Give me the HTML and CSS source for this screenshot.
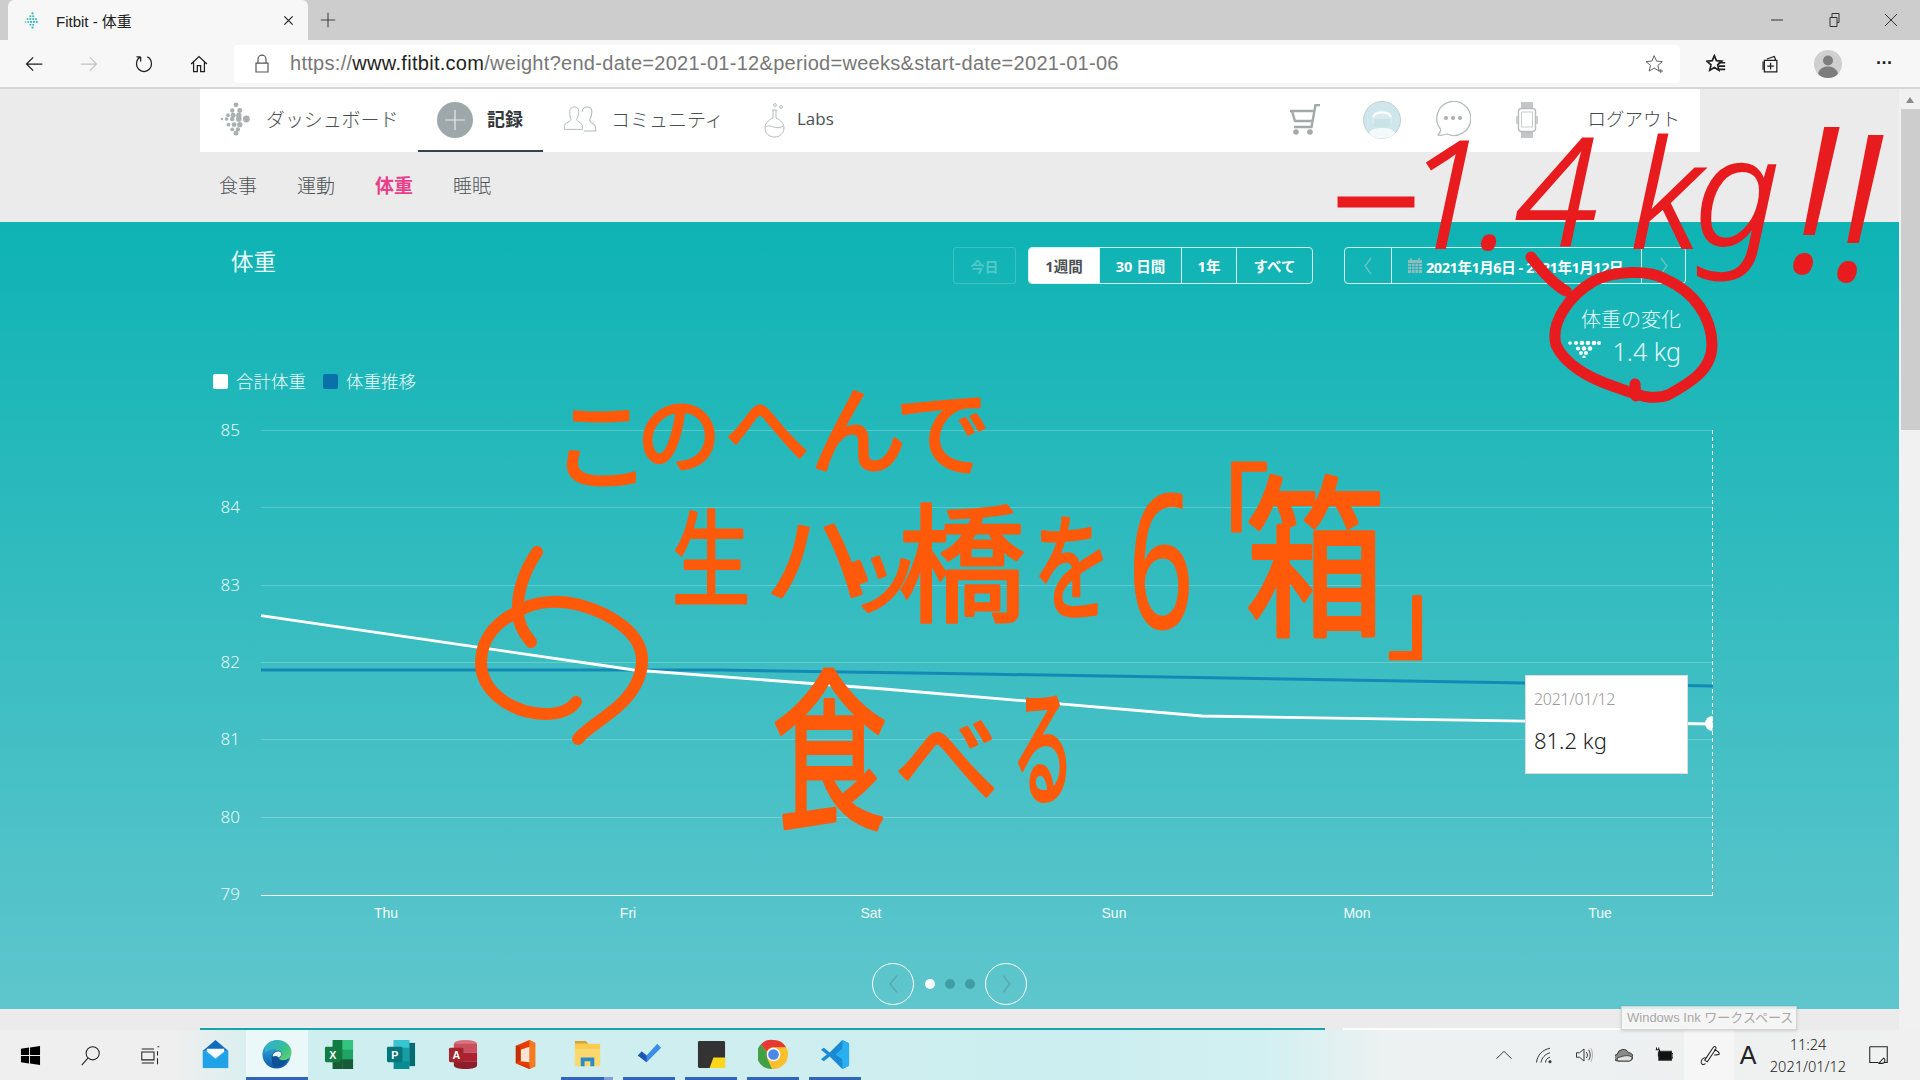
FILE: index.html
```html
<!DOCTYPE html>
<html lang="ja">
<head>
<meta charset="utf-8">
<title>Fitbit - 体重</title>
<link rel="stylesheet" href="styles.css">
</head>
<body>
<div class="window">
  <header class="tabstrip">
    <div class="tab">
      <svg class="favicon" viewBox="0 0 24 24"><g fill="#3fb6bd"><circle cx="12" cy="2" r="1.6"/><circle cx="9" cy="6" r="1.5"/><circle cx="13" cy="6" r="1.5"/><circle cx="5" cy="10" r="1.4"/><circle cx="9" cy="10" r="1.5"/><circle cx="13" cy="10" r="1.6"/><circle cx="17" cy="10" r="1.5"/><circle cx="2" cy="14" r="1.1"/><circle cx="6" cy="14" r="1.4"/><circle cx="10" cy="14" r="1.6"/><circle cx="14" cy="14" r="1.6"/><circle cx="18" cy="14" r="1.5"/><circle cx="9" cy="18" r="1.5"/><circle cx="13" cy="18" r="1.5"/><circle cx="12" cy="22" r="1.6"/></g></svg>
      <span class="tab-title">Fitbit - 体重</span>
      <svg class="tab-close" viewBox="0 0 12 12"><path d="M1.5 1.5l9 9M10.5 1.5l-9 9"/></svg>
    </div>
    <svg class="tab-new" viewBox="0 0 20 20"><path d="M10 2v16M2 10h16"/></svg>
    <div class="window-controls">
      <svg viewBox="0 0 14 14"><path d="M1 7h12"/></svg>
      <svg viewBox="0 0 14 14"><path d="M3 4.500h7v9H3zM5 4.500V.5h7v9h-2"/></svg>
      <svg viewBox="0 0 14 14"><path d="M1 1l12 12M13 1L1 13"/></svg>
    </div>
  </header>

  <div class="toolbar">
    <div class="tool-left">
      <svg class="tool-icon" viewBox="0 0 24 24"><path d="M22 12H3M11 4l-8 8 8 8"/></svg>
      <svg class="tool-icon tool-off" viewBox="0 0 24 24"><path d="M2 12h19M13 4l8 8-8 8"/></svg>
      <svg class="tool-icon" viewBox="0 0 24 24"><path d="M8 3.500C5 5 3 8 3 12a9 9 0 1 0 18 0c0-4-2-7-5-8.500M8 3.500V9M8 3.500H3"/></svg>
      <svg class="tool-icon" viewBox="0 0 24 24"><path d="M2.500 12L12 3l9.500 9M5.500 10v11h4.500v-7h4v7h4.500V10"/></svg>
    </div>
    <div class="address">
      <svg class="lock" viewBox="0 0 20 24"><path d="M5 11V6a5 5 0 0 1 10 0v5M2.500 11h15v11h-15z"/></svg>
      <span class="url">https://<b>www.fitbit.com</b>/weight?end-date=2021-01-12&amp;period=weeks&amp;start-date=2021-01-06</span>
      <svg class="star" viewBox="0 0 24 24"><path d="M11 2l2.800 6.500 7 .6-5.300 4.600 1.500 6.800L11 17l-6 3.500 1.600-6.800L1.300 9.100l7-.6zM19 18v5M16.500 20.500h5"/></svg>
    </div>
    <div class="tool-right">
      <svg class="tool-icon tool-fav" viewBox="0 0 24 24"><path d="M10 2l2.500 6 6.500.6-5 4.400 1.500 6.500-5.500-3.400-5.500 3.400L6 13 1 8.600l6.500-.6z"/><path d="M15 10.500h8M15 14.500h8M15 18.500h8"/></svg>
      <svg class="tool-icon" viewBox="0 0 24 24"><path d="M7 6l9-3 1.500 4M4 7.500h15v14H4zM11.500 10.500v8M7.500 14.500h8"/><path d="M2.500 9v10"/></svg>
      <svg class="profile" viewBox="0 0 28 28"><circle cx="14" cy="14" r="14" fill="#cfcfcf"/><circle cx="14" cy="10.500" r="5" fill="#7d7d7d"/><path d="M4 24c1-5 5-7.500 10-7.500s9 2.500 10 7.500c-2.500 2.500-6 4-10 4s-7.500-1.500-10-4z" fill="#7d7d7d"/></svg>
      <span class="more">···</span>
    </div>
  </div>

  <div class="browser-body">
    <main class="page">
      <nav class="site-nav">
        <a class="nav-item nav-dash">
          <svg class="logo" viewBox="0 0 36 36"><g fill="#a9b0b2"><circle cx="18" cy="3" r="2.600"/><circle cx="14" cy="9" r="2.300"/><circle cx="22" cy="9" r="2.600"/><circle cx="9.500" cy="14" r="2"/><circle cx="15" cy="14" r="2.600"/><circle cx="21" cy="14" r="2.800"/><circle cx="3" cy="18" r="1.300"/><circle cx="8" cy="18" r="1.900"/><circle cx="14" cy="18" r="2.500"/><circle cx="21" cy="18" r="3"/><circle cx="29" cy="18" r="3.600"/><circle cx="10" cy="24" r="2"/><circle cx="16" cy="24" r="2.600"/><circle cx="22" cy="24" r="2.800"/><circle cx="18" cy="33" r="2.600"/><circle cx="14" cy="29" r="2"/><circle cx="20" cy="29" r="2.300"/></g></svg>
          <span>ダッシュボード</span>
        </a>
        <a class="nav-item nav-log">
          <svg class="plus" viewBox="0 0 36 36"><circle cx="18" cy="18" r="18" fill="#9ea8ab"/><path d="M18 8v20M8 18h20" stroke="#e8ecec" stroke-width="1.200"/></svg>
          <strong>記録</strong>
        </a>
        <a class="nav-item nav-comm">
          <svg class="people" viewBox="0 0 34 28"><g fill="none" stroke="#b4babc" stroke-width="1.100"><path d="M7 6c0-3 2-5 5-5s5 2 5 5c0 3-1 6-2 8-1 1 0 2 1 3l3 2c2 1 2 3 2 6v1H1v-1c0-3 0-5 2-6l4-2c1-1 2-2 1-3-1-2-1-5-1-8z" transform="translate(-.5 1) scale(.9)"/><path d="M19 6c0-3 2-5 5-5s5 2 5 5c0 3-1 6-2 8-1 1 0 2 1 3l3 2c2 1 2 3 2 6v1H21" transform="translate(0 1) scale(.96)"/></g></svg>
          <span>コミュニティ</span>
        </a>
        <a class="nav-item nav-labs">
          <svg class="flask" viewBox="0 0 24 36"><g fill="none" stroke="#b6bcbd" stroke-width="1"><path d="M9 8h5M10 8v8C5 18 2 22 2 26c0 5 4 9 9.500 9S21 31 21 26c0-4-3-8-8-10V8"/><path d="M2.500 25c3-2 5-1 8 0s6 1 10-1"/><circle cx="12" cy="3" r="1.400"/><circle cx="18" cy="5" r="1.400"/></g></svg>
          <span>Labs</span>
        </a>
        <div class="nav-right">
          <svg class="cart" viewBox="0 0 32 32"><g fill="none" stroke="#a2a9a9" stroke-width="2.400"><path d="M31 1h-4.500l-4 22H5"/><path d="M1 7h24M3 7l3 10h18"/></g><circle cx="7" cy="28" r="2.800" fill="#a2a9a9"/><circle cx="21" cy="28" r="2.800" fill="#a2a9a9"/></svg>
          <svg class="avatar" viewBox="0 0 38 38"><circle cx="19" cy="19" r="18.500" fill="#cfe7ec" stroke="#c5cfd1"/><path d="M9 18c0-5 5-9 10-9s10 4 10 9v5H9z" fill="#d8ecef"/><path d="M10 16c2-6 16-6 18 0" fill="none" stroke="#fff" stroke-width="2"/><path d="M11 18h16v7c-2 2-14 2-16 0z" fill="#c8e3e8"/><path d="M6 32c2-4 7-5 13-5s11 1 13 5c-3 4-8 5.500-13 5.500S9 36 6 32z" fill="#f4fafb"/></svg>
          <svg class="chat" viewBox="0 0 36 38"><path d="M3 34c2-2 3-4 2.500-6A17 17 0 1 1 12 33c-3 1-6 2-9 1z" fill="#fff" stroke="#b8bcbd" stroke-width="1.300"/><g fill="#a8aeb0"><circle cx="11" cy="17" r="2"/><circle cx="18" cy="17" r="2"/><circle cx="25" cy="17" r="2"/></g></svg>
          <svg class="watch" viewBox="0 0 22 36"><rect x="5" y="0" width="12" height="7" fill="#c2c6c7"/><rect x="5" y="29" width="12" height="7" fill="#c2c6c7"/><rect x="2.500" y="6.500" width="17" height="23" rx="3" fill="#fff" stroke="#b8bcbd" stroke-width="1.400"/><rect x="5.500" y="10" width="11" height="15" fill="#fff" stroke="#c8cccd"/><path d="M1 14v8M21 14v8" stroke="#b8bcbd" stroke-width="1.400"/></svg>
          <span class="logout">ログアウト</span>
        </div>
      </nav>

      <nav class="subnav">
        <a>食事</a><a>運動</a><a class="subnav-active">体重</a><a>睡眠</a>
      </nav>

      <section class="hero">
        <div class="hero-top">
          <h1 class="hero-title">体重</h1>
          <button class="btn-today">今日</button>
          <div class="segments">
            <button class="seg seg-on seg-1">1週間</button>
            <button class="seg seg-2">30 日間</button>
            <button class="seg seg-3">1年</button>
            <button class="seg seg-4">すべて</button>
          </div>
          <div class="segments date-range">
            <button class="seg seg-arrow seg-prev"><svg viewBox="0 0 10 20"><path d="M8 2L2 10l6 8"/></svg></button>
            <button class="seg seg-date">
              <svg class="cal" viewBox="0 0 14 15"><path fill="#8fbdbd" d="M0 2h14v13H0z"/><path d="M0 5.500h14M0 8.500h14M0 11.500h14M3.500 5v10M7 5v10M10.500 5v10" stroke="#19b4b6" stroke-width=".8"/><path d="M3 0v3M11 0v3" stroke="#8fbdbd" stroke-width="1.600"/></svg>
              <span>2021年1月6日 - 2021年1月12日</span>
            </button>
            <button class="seg seg-arrow seg-next"><svg viewBox="0 0 10 20"><path d="M2 2l6 8-6 8"/></svg></button>
          </div>
        </div>

        <div class="change">
          <div class="change-label">体重の変化</div>
          <div class="change-value">
            <svg class="change-dots" viewBox="0 0 33 18"><g fill="#fff"><circle cx="2" cy="3" r="1.800"/><circle cx="8" cy="3" r="2.100"/><circle cx="14" cy="3" r="2.300"/><circle cx="20" cy="3" r="2.300"/><circle cx="26" cy="3" r="2.300"/><circle cx="31" cy="3" r="2"/><circle cx="10" cy="8.500" r="2.100"/><circle cx="16" cy="8.500" r="2.300"/><circle cx="22" cy="8.500" r="2.300"/><circle cx="13" cy="13" r="1.900"/><circle cx="18" cy="13" r="2.100"/><circle cx="16" cy="17" r="1.600"/></g></svg>
            <span>1.4 kg</span>
          </div>
        </div>

        <ul class="legend">
          <li><i class="swatch swatch-white"></i>合計体重</li>
          <li><i class="swatch swatch-blue"></i>体重推移</li>
        </ul>

        <div class="chart">
          <svg class="chart-svg" viewBox="200 410 1540 520" width="1540" height="520">
            <g class="grid">
              <path d="M261 430.500H1713M261 507.500H1713M261 585.500H1713M261 662.500H1713M261 739.500H1713M261 817.500H1713"/>
            </g>
            <path class="baseline" d="M261 895.500H1713"/>
            <path class="crosshair" d="M1712.500 430V895"/>
            <g class="y-labels">
              <text x="240" y="436">85</text><text x="240" y="513">84</text><text x="240" y="591">83</text><text x="240" y="668">82</text><text x="240" y="745">81</text><text x="240" y="823">80</text><text x="240" y="900">79</text>
            </g>
            <g class="x-labels">
              <text x="386" y="918">Thu</text><text x="628" y="918">Fri</text><text x="871" y="918">Sat</text><text x="1114" y="918">Sun</text><text x="1357" y="918">Mon</text><text x="1600" y="918">Tue</text>
            </g>
            <polyline class="trend" points="261,670 720,670 980,674 1525,683 1713,686"/>
            <polyline class="weight" points="261,615.700 634,670 884,689 1202,716 1713,724"/>
            <path class="marker" d="M1712.500 716a7.500 7.500 0 0 0 0 15z"/>
          </svg>
          <div class="tooltip">
            <div class="tip-date">2021/01/12</div>
            <div class="tip-value">81.2 kg</div>
          </div>
        </div>

        <div class="pager">
          <button class="pager-btn"><svg viewBox="0 0 12 24"><path d="M10 2L2 12l8 10"/></svg></button>
          <i class="pager-dot pager-dot-on"></i><i class="pager-dot"></i><i class="pager-dot"></i>
          <button class="pager-btn"><svg viewBox="0 0 12 24"><path d="M2 2l8 10-8 10"/></svg></button>
        </div>
      </section>

      <div class="page-foot">
        <div class="progress-teal"></div>
        <div class="progress-white"></div>
      </div>
    </main>
    <aside class="scrollbar">
      <svg class="scroll-up" viewBox="0 0 10 8"><path d="M5 1l4 6H1z"/></svg>
      <div class="scroll-thumb"></div>
    </aside>
  </div>

  <footer class="taskbar">
    <div class="task-sys">
      <div class="sys-cell"><svg class="ico-start" viewBox="0 0 22 22"><path d="M1 4l8.500-1.300V10.500H1zM10.500 2.500L21 1v9.500H10.500zM1 11.500h8.500v7.800L1 18zM10.500 11.500H21V21l-10.500-1.500z" fill="#000"/></svg></div>
      <div class="sys-cell"><svg class="ico-sys" viewBox="0 0 24 24"><circle cx="14.500" cy="9.500" r="7.500"/><path d="M9 15L2 23"/></svg></div>
      <div class="sys-cell"><svg class="ico-sys" viewBox="0 0 24 24"><path d="M2 8h14v9H2zM2 4.500h14M2 20.500h14M20 2h2M20 7v5M20 15v7"/></svg></div>
    </div>
    <div class="task-apps">
      <div class="app"><svg viewBox="0 0 32 32"><path d="M3 12L16 1l13 11v18H3z" fill="#0f6cbd"/><path d="M3 12h26v18H3z" fill="#28a8ea"/><path d="M7 10h18v3L16 20 7 13z" fill="#fff"/><path d="M3 12l13 10 13-10v18H3z" fill="#1fa3e6"/></svg></div>
      <div class="app app-active"><svg viewBox="0 0 32 32"><defs><linearGradient id="edgeB" x1="0" y1="0" x2="0" y2="1"><stop offset="0" stop-color="#36b6ea"/><stop offset="1" stop-color="#0d5aa5"/></linearGradient><linearGradient id="edgeG" x1="0" y1="0" x2="1" y2="1"><stop offset="0" stop-color="#2fa9e0"/><stop offset=".6" stop-color="#39c28c"/><stop offset="1" stop-color="#6fd66d"/></linearGradient></defs><circle cx="15" cy="16" r="14.500" fill="url(#edgeB)"/><path d="M3 9C6 3 11 1 16 1c8 0 14.500 6 14.500 13 0 5-4 8-8 8-3 0-5-1-5-2 3-1 3-4 2-6-2-3-6-4-9-3.500S5 12 3 14z" fill="url(#edgeG)"/><path d="M10 19c0-4 3-7 7-7 2 0 3 1 3.500 3 0 2-1 3-3 4-.5 2 2 3.500 5 3 2 0 4-1 5-3-2 6-7 10-13 10-2 0-4-1-4-3z" fill="#0f4f94"/><path d="M11 18c0-3 3-5 6-5 2 0 3 1 3 2.500s-1 2.500-3 3.500c-1-1-2-1.500-3-1.500s-2 .5-3 .5z" fill="#eaf8fa"/></svg></div>
      <div class="app"><svg viewBox="0 0 32 32"><path d="M9 1h21v30H9z" fill="#21a366"/><path d="M9 1h10v10H9z" fill="#107c41"/><path d="M19 1h11v10H19z" fill="#33c481"/><path d="M9 11h10v10H9z" fill="#107c41"/><path d="M19 21h11v10H19z" fill="#185c37"/><path d="M9 21h10v10H9z" fill="#185c37"/><rect x="1" y="8" width="16" height="16" rx="1.500" fill="#107c41"/><text class="app-letter" x="9" y="21">X</text></svg></div>
      <div class="app"><svg viewBox="0 0 32 32"><path d="M8 1h16v30H8z" fill="#10a0a6"/><path d="M8 1h16v8H8z" fill="#37c6d0"/><path d="M8 23h16v8H8z" fill="#078c91"/><path d="M24 4h6v24h-6z" fill="#036c70"/><rect x="1" y="8" width="16" height="16" rx="1.500" fill="#077579"/><text class="app-letter" x="9" y="21">P</text></svg></div>
      <div class="app"><svg viewBox="0 0 32 32"><ellipse cx="18" cy="5" rx="12" ry="4" fill="#d9727f"/><path d="M6 5h24v9H6z" fill="#c8505f"/><path d="M6 14h24v9H6z" fill="#af2031"/><path d="M6 23h24v4c0 2.500-5 4-12 4S6 29.500 6 27z" fill="#8f1c2a"/><rect x="1" y="9" width="15" height="15" rx="1.500" fill="#a4262c"/><text class="app-letter" x="8.500" y="21">A</text></svg></div>
      <div class="app"><svg viewBox="0 0 32 32"><path d="M20 1L6 7v18l14 6 6-3V4z" fill="#eb3c00"/><path d="M20 1l6 3v24l-6 3z" fill="#f47b20"/><path d="M11 11l9-3v16l-9-1z" fill="#fbe3d6"/><path d="M6 25l14 2v4z" fill="#d83b01"/><path d="M6 7l5 1v14l-5 3z" fill="#c22f00"/></svg></div>
      <div class="app"><svg viewBox="0 0 32 32"><path d="M3 2h11l3 3H3z" fill="#d9a22c"/><path d="M3 5h26v23H3z" fill="#fbcb4c"/><path d="M3 10h26v18H3z" fill="#fcd96f"/><path d="M9 28V19h14v9h-4v-5h-6v5z" fill="#2b8ac7"/></svg></div>
      <div class="app"><svg viewBox="0 0 32 32"><path d="M13 24l-9-7 4-4 5 4 11-12 4 4z" fill="#3a8ee6"/><path d="M13 24l-9-7 4-4 5 4z" fill="#1f55b3"/></svg></div>
      <div class="app"><svg viewBox="0 0 32 32"><rect x="2" y="2" width="28" height="28" rx="1.500" fill="#333"/><path d="M14 30l4-11h12v11z" fill="#ffd619"/></svg></div>
      <div class="app"><svg viewBox="0 0 32 32"><circle cx="16" cy="16" r="15" fill="#fbc02d"/><path d="M16 1a15 15 0 0 1 13 7.500H16a7.500 7.500 0 0 0-7 4.700L3 5.500A15 15 0 0 1 16 1z" fill="#e53935"/><path d="M3 5.500l6 8 .5 6.500 5 11A15 15 0 0 1 3 5.500z" fill="#43a047"/><circle cx="16" cy="16" r="7" fill="#fff"/><circle cx="16" cy="16" r="5.500" fill="#4a87e8"/></svg></div>
      <div class="app"><svg viewBox="0 0 32 32"><path d="M23 1l7 3.500v23L23 31 10 18l-6 5-3-2 6-5-6-5 3-2 6 5z" fill="#1a8ad4"/><path d="M23 1l7 3.500v23L23 31V21l-7-5 7-6z" fill="#29b0f0"/></svg></div>
    </div>
    <div class="tray">
      <div class="tray-cell"><svg viewBox="0 0 24 24"><path d="M2 17l10-10 10 10"/></svg></div>
      <div class="tray-cell"><svg viewBox="0 0 24 24"><path d="M2 22C3 12 10 5 20 3M8 22c1-6 5-11 12-13M14 22c0-3 2-6 6-7"/><circle cx="20" cy="21" r="1.500" fill="#333"/></svg></div>
      <div class="tray-cell"><svg viewBox="0 0 24 24"><path d="M2 9h4l6-5v16l-6-5H2zM15 8c2 2 2 6 0 8M18 5c3 4 3 10 0 14"/><path d="M21 3c3 5 3 13 0 18" stroke="#aaa"/></svg></div>
      <div class="tray-cell"><svg viewBox="0 0 24 24"><path d="M4 20a4.500 4.500 0 0 1-1-9 8 8 0 0 1 15-2 5.500 5.500 0 0 1 1 11z" fill="#8a8a8a"/><path d="M3 16a4.500 4.500 0 0 0 1 4h15a5.500 5.500 0 0 0 4-5c-4-3-10-3-20 1z" fill="#e0e0e0" stroke="#444"/></svg></div>
      <div class="tray-cell"><svg class="bat" viewBox="0 0 24 24"><rect x="5" y="7" width="17" height="12" fill="#111"/><path d="M22 10h2v6h-2M2 2v3M5 2v3M1 5h5v3l-1.500 2v4" stroke="#111"/></svg></div>
      <div class="tray-pen"><svg viewBox="0 0 28 28"><path d="M10 24c-3 2-6 1-5-3 1-3 4-5 6-3M9 20L19 5c2-2 4 0 3 2L12 22zM20 8c3 1 6 2 6 5-1 1-4 1-6 1"/></svg></div>
      <div class="tray-ime">A</div>
      <div class="tray-clock"><span>11:24</span><span>2021/01/12</span></div>
      <div class="tray-note"><svg viewBox="0 0 24 24"><path d="M2 2h20v18h-4M12 20H7l-2 0-3 0V2"/><path d="M12 21c2-1 3-4 6-6 2 1 2 6-2 6z"/></svg></div>
    </div>
  </footer>

  <div class="ink-tip">Windows Ink ワークスペース</div>

  <svg class="ink" viewBox="0 0 1920 1080" width="1920" height="1080">
    <g class="ink-red-text">
      <text x="1338" y="222" class="ink-dash">—</text>
      <text x="1404" y="248">1</text>
      <text x="1478" y="248">.</text>
      <text x="1515" y="246">4</text>
      <text x="1630" y="248">k</text>
      <text x="1694" y="245">g</text>
      <text x="1789" y="272" class="ink-bang">!</text>
      <text x="1833" y="280" class="ink-bang">!</text>
    </g>
    <g class="ink-stroke ink-red-stroke">
      <path d="M1531 257C1545 275 1555 285 1566 291M1594 281C1615 270 1650 270 1665 279 1695 292 1712 318 1712 345 1712 370 1690 383 1668 395 1650 402 1630 392 1610 385 1590 378 1565 365 1556 345 1550 322 1570 295 1594 281M1635 384L1636 396"/>
    </g>
    <g class="ink-orange-text">
      <text x="551" y="482" class="ink-lg">こ</text>
      <text x="637" y="466">の</text>
      <text x="725" y="460">へ</text>
      <text x="810" y="466" class="ink-md">ん</text>
      <text x="895" y="468" class="ink-md">で</text>
      <text transform="translate(672 598) scale(.75 1)" class="ink-xl">生</text>
      <text x="765" y="598" class="ink-xl">ハ</text>
      <text x="838" y="605">ッ</text>
      <text x="898" y="612" class="ink-xxl">橋</text>
      <text transform="translate(1033 610) scale(.75 1.100)" class="ink-xl">を</text>
      <text transform="translate(1128 628) scale(.62 1)" class="ink-6">6</text>
      <text x="1165" y="552" class="ink-xl">「</text>
      <text transform="translate(1245 622) scale(1.100 1.350)" class="ink-xxl">箱</text>
      <text x="1387" y="650" class="ink-md">」</text>
      <text transform="translate(772 815) scale(.9 1.350)" class="ink-xxl">食</text>
      <text x="895" y="798" class="ink-xl">べ</text>
      <text transform="translate(1012 795) scale(.6 1.250)" class="ink-xl">る</text>
    </g>
    <g class="ink-stroke ink-orange-stroke">
      <path d="M537 552C525 570 517 590 518 612 518 625 525 635 531 642M517 612C535 600 560 600 580 605 615 615 642 635 642 660 642 680 630 698 610 713 595 725 585 730 578 739M517 612C490 625 481 645 481 663 481 690 510 713 545 714 560 714 570 710 576 702"/>
    </g>
  </svg>
</div>
</body>
</html>
```
FILE: styles.css
```css
* { box-sizing: border-box; }
html, body { margin: 0; padding: 0; }
body { width: 1920px; height: 1080px; overflow: hidden; font-family: "Noto Sans", "Noto Sans CJK JP", sans-serif; color: #333; background: #ebebeb; }
a { color: inherit; text-decoration: none; }
button { font: inherit; padding: 0; background: none; border: 0; }
svg { display: block; flex: none; }

.window { position: relative; width: 1920px; height: 1080px; display: flex; flex-direction: column; }

/* browser chrome */
.tabstrip { height: 40px; background: #cdcdcd; display: flex; align-items: stretch; padding-left: 8px; }
.tab { width: 300px; background: #f7f7f7; border-radius: 6px 6px 0 0; display: flex; align-items: center; padding-left: 16px; }
.favicon { width: 17px; height: 21px; }
.tab-title { margin-left: 15px; font: 15px "Liberation Sans", "Noto Sans CJK JP", sans-serif; color: #222; flex: 1; }
.tab-close { width: 11px; height: 11px; margin-right: 14px; fill: none; stroke: #222; stroke-width: 1.300; }
.tab-new { width: 18px; height: 18px; margin: 11px 0 0 11px; fill: none; stroke: #444; stroke-width: 1.200; }
.window-controls { margin-left: auto; display: flex; gap: 43px; align-items: center; padding-right: 22px; }
.window-controls svg { width: 14px; height: 14px; fill: none; stroke: #333; stroke-width: 1; }

.toolbar { height: 49px; background: #f7f7f7; border-bottom: 2px solid #d6d6d6; display: flex; align-items: center; }
.tool-left { width: 234px; display: flex; align-items: center; padding-left: 24px; gap: 35px; }
.tool-icon { width: 20px; height: 20px; fill: none; stroke: #1f1f1f; stroke-width: 1.500; }
.tool-off { stroke: #c4c4c4; }
.tool-fav { stroke-width: 2; }
.address { width: 1446px; height: 38px; background: #fff; border-radius: 4px; display: flex; align-items: center; padding-left: 20px; }
.lock { width: 16px; height: 20px; fill: none; stroke: #555; stroke-width: 1.500; }
.url { margin-left: 20px; font: 20px "Liberation Sans", sans-serif; color: #777; white-space: nowrap; flex: 1; letter-spacing: .29px; }
.url b { font-weight: 400; color: #222; }
.star { width: 20px; height: 20px; margin-right: 15px; fill: none; stroke: #555; stroke-width: 1.100; }
.tool-right { flex: 1; display: flex; align-items: center; padding-left: 26px; }
.tool-right .tool-icon + .tool-icon { margin-left: 35px; }
.profile { width: 28px; height: 28px; margin-left: 33px; }
.more { margin-left: 34px; font: 700 18px "Liberation Sans", sans-serif; color: #222; letter-spacing: -.5px; }

.browser-body { height: 941px; display: flex; }
.page { width: 1899px; display: flex; flex-direction: column; }
.scrollbar { flex: 1; background: #f1f1f1; padding: 7px 0 0 2px; }
.scroll-up { width: 10px; height: 8px; margin: 0 0 0 4px; fill: #8a8a8a; }
.scroll-thumb { height: 321px; background: #cdcdcd; margin-top: 5px; }

/* site navigation */
.site-nav { height: 63px; width: 1500px; margin-left: 200px; background: #fff; display: flex; align-items: center; font-weight: 300; font-size: 19px; color: #4a4f52; position: relative; }
.nav-item { display: flex; align-items: center; height: 63px; }
.nav-item span, .nav-log strong, .logout { position: relative; top: -2px; }
.nav-dash { margin-left: 19px; width: 199px; letter-spacing: -.1px; }
.logo { width: 34px; height: 34px; margin-right: 13px; margin-top: -3px; }
.nav-log { width: 125px; padding-left: 19px; border-bottom: 2px solid #3a4146; }
.plus { width: 36px; height: 36px; margin-right: 14px; }
.nav-log strong { font-size: 18px; font-weight: 700; color: #33383b; }
.nav-comm { margin-left: 21px; width: 199px; }
.people { width: 34px; height: 28px; margin-right: 13px; margin-top: -3px; }
.nav-labs { width: 80px; font-size: 17px; font-family: "Open Sans", sans-serif; font-weight: 400; }
.flask { width: 24px; height: 36px; margin-right: 10px; margin-top: -2px; }
.nav-right { margin-left: auto; display: flex; align-items: center; padding-right: 20px; margin-top: -2px; }
.cart { width: 32px; height: 32px; margin-right: 42px; }
.avatar { width: 38px; height: 38px; margin-right: 34px; }
.chat { width: 36px; height: 38px; margin-right: 45px; }
.watch { width: 22px; height: 36px; margin-right: 49px; }
.logout { font-size: 18.500px; color: #44494c; }

.subnav { height: 70px; padding-left: 219px; display: flex; align-items: center; gap: 40px; font-size: 19px; font-weight: 300; color: #4e5356; padding-bottom: 4px; }
.subnav-active { color: #e9408c; font-weight: 700; }

/* hero */
.hero { height: 787px; background: linear-gradient(180deg, #0eb3b4 0%, #5fc6cd 100%); display: flex; flex-direction: column; color: #fff; }
.hero-top { height: 62px; padding: 25px 213px 0 231px; display: flex; align-items: flex-start; }
.hero-title { margin: 0; font-size: 22.500px; font-weight: 400; line-height: 32px; color: #eafafa; width: 722px; margin-top: -1px; }
.btn-today { width: 63px; height: 37px; border: 1px solid rgba(255, 255, 255, .18); border-radius: 3px; color: rgba(255, 255, 255, .28); font-size: 14px; font-weight: 700; margin-right: 12px; }
.segments { display: flex; height: 37px; border: 1px solid #d6f3f3; border-radius: 4px; overflow: hidden; }
.seg { height: 35px; font-size: 14.500px; font-weight: 700; color: #fff; border-left: 1px solid #d6f3f3; display: flex; align-items: center; justify-content: center; white-space: nowrap; }
.seg-1 { width: 70px; border-left: 0; }
.seg-on { background: #fff; color: #4a4f52; }
.seg-2 { width: 82px; }
.seg-3 { width: 55px; }
.seg-4 { width: 76px; }
.date-range { margin-left: 31px; width: 342px; }
.seg-arrow svg { width: 10px; height: 20px; fill: none; stroke: #6cc4c4; stroke-width: 1.300; }
.seg-prev { width: 46px; border-left: 0; }
.seg-date { width: 250px; justify-content: flex-start; padding-left: 16px; padding-top: 2px; font-size: 14.500px; letter-spacing: -.45px; }
.seg-next { width: 44px; }
.cal { width: 14px; height: 15px; margin-right: 4px; margin-top: -2px; }

.change { height: 89px; padding: 23px 218px 0 0; text-align: right; color: #e5f8f8; }
.change-label { font-size: 20px; line-height: 26px; font-weight: 300; }
.change-value { display: flex; justify-content: flex-end; align-items: center; height: 36px; font-size: 25px; font-weight: 300; }
.change-dots { width: 33px; height: 18px; margin-right: 12px; margin-top: -4px; }

.legend { list-style: none; margin: 0; padding: 0 0 0 213px; height: 20px; display: flex; gap: 17px; font-size: 17.500px; font-weight: 300; line-height: 20px; color: #f0fbfb; margin-top: -2px; }
.legend li { display: flex; align-items: center; }
.swatch { width: 15px; height: 15px; border-radius: 2px; margin-right: 8px; }
.swatch-white { background: #fff; }
.swatch-blue { background: #0a70a9; }

.chart { position: relative; height: 520px; margin: 19px 0 0 200px; width: 1540px; }
.chart-svg { width: 1540px; height: 520px; }
.grid path { stroke: rgba(255, 255, 255, .22); stroke-width: 1; fill: none; }
.baseline { stroke: #f2fbfb; stroke-width: 1.200; }
.crosshair { stroke: #fff; stroke-width: 1; stroke-dasharray: 4 3; fill: none; }
.y-labels text { font: 300 17px "Noto Sans", sans-serif; fill: #e6f8f8; text-anchor: end; }
.x-labels text { font: 14px "Liberation Sans", sans-serif; fill: #f2fbfb; text-anchor: middle; }
.trend { fill: none; stroke: #1589b6; stroke-width: 3; }
.weight { fill: none; stroke: #fff; stroke-width: 2.800; }
.marker { fill: #fff; }
.tooltip { position: absolute; left: 1325px; top: 265px; width: 163px; height: 99px; background: #fff; border: 1px solid #dcdcdc; padding: 12px 8px 0; font-family: "Noto Sans", sans-serif; font-weight: 300; }
.tip-date { font-size: 16px; line-height: 22px; color: #9a9a9a; letter-spacing: -.3px; }
.tip-value { font-size: 22px; line-height: 30px; margin-top: 15px; color: #222; }

.pager { margin-top: 33px; height: 42px; display: flex; align-items: center; justify-content: center; }
.pager-btn { width: 42px; height: 42px; border: 1px solid #fff; border-radius: 50%; display: flex; align-items: center; justify-content: center; margin: 0 5.500px; }
.pager-btn svg { width: 11px; height: 20px; fill: none; stroke: #5aa3a8; stroke-width: 1.500; }
.pager-dot { width: 10px; height: 10px; border-radius: 50%; background: #3f9da3; margin: 0 5px; }
.pager-dot-on { background: #fff; }

.page-foot { height: 21px; background: #ebebeb; display: flex; align-items: flex-end; padding-left: 200px; }
.progress-teal { width: 1125px; height: 2px; background: #15a4a8; }
.progress-white { width: 337px; height: 2px; background: #fff; margin-left: 18px; }

/* taskbar */
.taskbar { height: 50px; display: flex; background: linear-gradient(90deg, #efefef 0, #efefef 9%, #cfeeef 15%, #cdeef0 58%, #d2f0f2 66%, #ecf1f1 72%, #f0f0f0 100%); }
.task-sys { width: 184px; display: flex; }
.sys-cell { width: 60px; display: flex; align-items: center; justify-content: center; }
.ico-start { width: 21px; height: 21px; }
.ico-sys { width: 21px; height: 21px; fill: none; stroke: #222; stroke-width: 1.200; }
.task-apps { display: flex; }
.app { width: 62px; display: flex; align-items: center; justify-content: center; position: relative; padding-bottom: 1px; }
.app svg { width: 31px; height: 31px; }
.app::after { content: ""; position: absolute; left: 5px; right: 5px; bottom: 0; height: 3px; background: #2f66b7; display: none; }
.app:nth-child(n+7)::after, .app-active::after { display: block; }
.app:nth-child(7)::after { background: linear-gradient(90deg, #2f66b7 82%, #7f9fd6 82%); }
.app-active { background: #ebf8f9; }
.app-active::after { left: 0; right: 0; }
.app-letter { font: 700 11px "Liberation Sans", sans-serif; fill: #fff; text-anchor: middle; }
.tray { margin-left: auto; display: flex; width: 436px; }
.tray-cell { width: 40px; display: flex; align-items: center; justify-content: center; }
.tray-cell svg { width: 18px; height: 18px; fill: none; stroke: #333; stroke-width: 1.300; }
.tray-pen { width: 50px; background: #f6f6f6; display: flex; align-items: center; justify-content: center; }
.tray-pen svg { width: 24px; height: 24px; fill: none; stroke: #222; stroke-width: 1.200; }
.tray-ime { width: 28px; text-align: center; font: 25px/50px "Liberation Sans", sans-serif; color: #222; }
.tray-clock { width: 92px; display: flex; flex-direction: column; align-items: center; justify-content: center; font: 14.500px/22px "Noto Sans", sans-serif; font-weight: 300; color: #222; }
.tray-note { width: 48px; display: flex; align-items: center; justify-content: center; }
.tray-note svg { width: 21px; height: 21px; fill: none; stroke: #222; stroke-width: 1.200; }

/* overlays */
.ink-tip { position: absolute; left: 1621px; top: 1006px; width: 176px; height: 24px; background: rgba(246, 246, 246, .82); border: 1px solid #d4d4d4; box-shadow: 0 1px 3px rgba(0, 0, 0, .15); font: 13px/22px "Liberation Sans", "Noto Sans CJK JP", sans-serif; color: #a8a8a8; padding-left: 5px; white-space: nowrap; }
.ink { position: absolute; left: 0; top: 0; pointer-events: none; }
.ink-stroke path { fill: none; stroke-linecap: round; stroke-linejoin: round; }
.ink-red-stroke path { stroke: #e81c1e; stroke-width: 11px; }
.ink-orange-stroke path { stroke: #ff5a0a; stroke-width: 12px; }
.ink-red-text text { font-family: "Noto Sans", sans-serif; font-size: 150px; font-weight: 300; fill: #e81c1e; stroke: #e81c1e; stroke-width: 2px; font-style: italic; }
.ink-red-text .ink-dash { font-size: 76px; font-style: normal; stroke-width: 7px; }
.ink-red-text .ink-bang { font-size: 200px; }
.ink-orange-text text { font-family: "Noto Sans CJK JP", sans-serif; font-size: 84px; fill: #ff5a0a; stroke: #ff5a0a; stroke-width: 3px; stroke-linejoin: round; }
.ink-orange-text .ink-md { font-size: 96px; }
.ink-orange-text .ink-lg { font-size: 100px; }
.ink-orange-text .ink-xl { font-size: 104px; }
.ink-orange-text .ink-xxl { font-size: 128px; }
.ink-orange-text .ink-6 { font-size: 186px; font-family: "Noto Sans", sans-serif; stroke-width: 1px; font-weight: 400; }
```
